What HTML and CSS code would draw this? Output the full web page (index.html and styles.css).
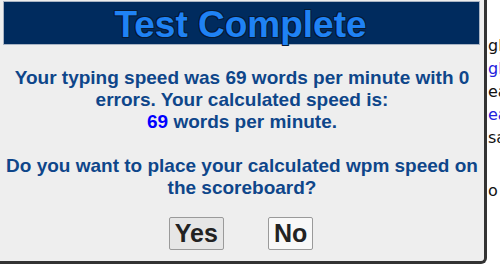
FILE: index.html
```html
<!DOCTYPE html>
<html lang="en">
<head>
  <meta charset="UTF-8">
  <title>Test Complete</title>
  <link rel="stylesheet" href="styles.css">
</head>
<body>
  <div class="page">
    <!-- Result dialog -->
    <div class="dialog">
      <div class="dialog-header">
        <h1>Test Complete</h1>
      </div>
      <div class="dialog-body">
        <p>Your typing speed was 69 words per minute with 0 errors. Your calculated speed is:<br>
          <span class="wpm">69</span> words per minute.</p>
        <p>Do you want to place your calculated wpm speed on the scoreboard?</p>
      </div>
      <div class="dialog-footer">
        <button class="btn active">Yes</button>
        <button class="btn">No</button>
      </div>
    </div>

    <!-- Page text behind the dialog -->
    <div class="side">
      <div class="line">gl</div>
      <div class="line link">gl</div>
      <div class="line">ea</div>
      <div class="line link">ea</div>
      <div class="line">sa</div>
      <div class="line gap">o</div>
    </div>
  </div>
</body>
</html>
```

FILE: styles.css
```css
body {
  margin: 0;
  background: #fff;
  font-family: "Liberation Sans", Arial, sans-serif;
}

.page {
  display: flex;
  align-items: flex-start;
  width: 500px;
  height: 272px;
  overflow: hidden;
}

.dialog {
  flex: 0 0 484px;
  height: 260px;
  background: #eeeeee;
  border-right: 3px solid #333;
  border-bottom: 3px solid #333;
  border-bottom-right-radius: 6px;
  padding-top: 1px;
}

.dialog-header {
  margin-left: 3px;
  width: 475px;
  height: 42px;
  background: #002b5e;
  border: 1px solid #a9b4c4;
  display: flex;
  justify-content: center;
  align-items: center;
}

.dialog-header h1 {
  margin: 2px 0 0 -2px;
  font-size: 37px;
  font-weight: bold;
  color: #1f82f4;
  line-height: 1;
  text-shadow: 1px 1px 0 #071a33, -1px -1px 0 #071a33, 1px -1px 0 #071a33, -1px 1px 0 #071a33;
}

.dialog-body {
  text-align: center;
  color: #0e468a;
  font-weight: bold;
  font-size: 19px;
  line-height: 22px;
  padding: 22px 6px 0;
}

.dialog-body p {
  margin: 0 0 22px;
}

.wpm {
  color: #0000ff;
}

.dialog-footer {
  display: flex;
  justify-content: center;
  gap: 44px;
  margin-top: -4px;
  padding-right: 2px;
}

.btn {
  font-family: "Liberation Sans", Arial, sans-serif;
  font-size: 25px;
  font-weight: bold;
  color: #222;
  background: #f8f8f8;
  border: 1px solid #9a9a9a;
  border-radius: 2px;
  height: 33px;
  padding: 0 5px;
  line-height: 31px;
}

.btn.active {
  background: #e6e6e6;
}

.side {
  padding-top: 34px;
  padding-left: 1px;
  font-family: "DejaVu Sans", sans-serif;
  font-size: 16px;
  line-height: 23px;
  color: #111;
}

.side .link {
  color: #2222dd;
}

.side .gap {
  margin-top: 30px;
}
```
